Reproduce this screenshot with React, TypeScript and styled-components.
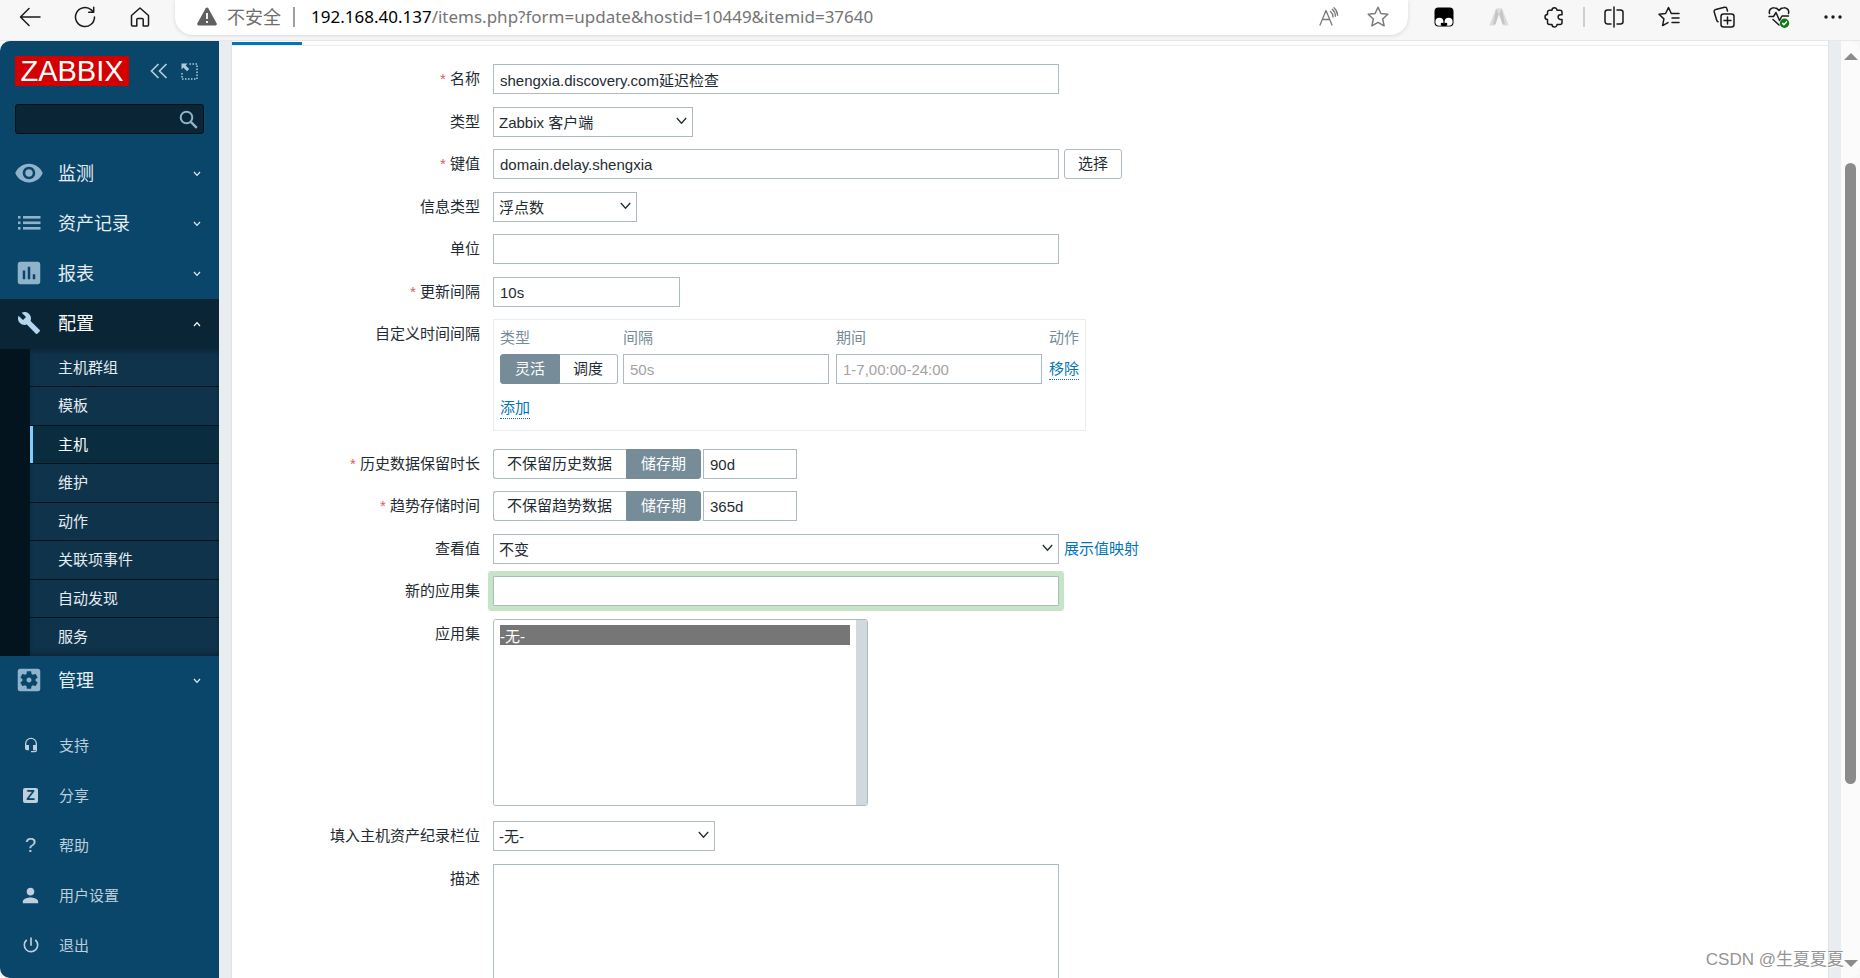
import React from "react";
import styled, { createGlobalStyle, css } from "styled-components";
import {
  MdVisibility,
  MdAssessment,
  MdBuild,
  MdSettingsApplications,
  MdHeadsetMic,
  MdPerson,
  MdPowerSettingsNew,
} from "react-icons/md";

const sans = `"Liberation Sans", "Noto Sans CJK SC", sans-serif`;
const ui = `"Noto Sans", "Noto Sans CJK SC", sans-serif`;

const GlobalStyle = createGlobalStyle`
  *, *::before, *::after { box-sizing: border-box; }
  body { margin: 0; background: #f7f7f7; font: 15px/20px ${sans}; color: #1f2c33; }
  button, input, select, textarea { font: inherit; color: inherit; margin: 0; }
  ul { list-style: none; margin: 0; padding: 0; }
`;

const Window = styled.div`
  display: flex;
  flex-direction: column;
  height: 100vh;
  overflow: hidden;
`;

/* ---------- browser toolbar ---------- */

const Toolbar = styled.header`
  display: flex;
  flex: none;
  height: 41px;
  padding-left: 2px;
  background: #f7f7f7;
  border-bottom: 1px solid #e8e8e8;
  font-family: ${ui};
`;

const ToolButton = styled.button`
  display: flex;
  align-items: center;
  justify-content: center;
  flex: none;
  width: 55px;
  height: 33px;
  padding: 0;
  border: 0;
  background: none;
  color: #1a1a1a;
  svg { display: block; fill: none; stroke: currentColor; stroke-width: 1.5; stroke-linejoin: round; stroke-linecap: round; }
`;

const AddressBar = styled.div`
  display: flex;
  align-items: center;
  flex: 1;
  min-width: 0;
  height: 35px;
  margin-left: 8px;
  padding: 0 6px 2px 22px;
  border-radius: 0 0 18px 18px;
  background: #fff;
  box-shadow: 0 1px 4px rgba(0, 0, 0, 0.12);
  color: #757575;
  font-size: 17px;
  line-height: 24px;
  white-space: nowrap;
`;

const Security = styled.span`
  display: flex;
  align-items: center;
  gap: 10px;
  padding-right: 12px;
  font-size: 18px;
  color: #6e6e6e;
`;

const Divider = styled.span`
  flex: none;
  width: 2px;
  height: 20px;
  background: #a0a0a0;
`;

const Address = styled.span`
  flex: 1;
  padding-left: 16px;
  b { font-weight: 400; color: #000; }
`;

const AddressButton = styled(ToolButton)`
  width: 49px;
  color: #7a7a7a;
`;

const Extensions = styled.div`
  display: flex;
  padding-left: 8px;
  ${ToolButton}:last-child { width: 54px; }
`;

const ToolDivider = styled.span`
  width: 2px;
  height: 20px;
  margin: 7px 1px 0 2px;
  background: #cfcfcf;
`;

/* ---------- page frame ---------- */

const Page = styled.div`
  display: flex;
  flex: 1;
  min-height: 0;
  border-radius: 10px;
  overflow: hidden;
  background: #e9edf0;
`;

const Sidebar = styled.aside`
  display: flex;
  flex-direction: column;
  flex: none;
  width: 219px;
  background: #0a466a;
  color: #e4edf2;
`;

const Brand = styled.div`
  display: flex;
  align-items: center;
  padding: 15px 15px 0;
`;

const Logo = styled.a`
  flex: none;
  width: 114px;
  height: 30px;
  margin-right: 18px;
  background: #d40000;
  color: #fff;
  font-size: 29px;
  line-height: 30px;
  text-align: center;
  text-decoration: none;
`;

const BrandButton = styled.button`
  display: flex;
  flex: none;
  width: 24px;
  padding: 0;
  margin-right: 6px;
  border: 0;
  background: none;
  justify-content: center;
  color: #b3cbd9;
`;

const Search = styled.form`
  display: flex;
  align-items: center;
  height: 30px;
  margin: 18px 15px 15px;
  padding-right: 5px;
  border: 1px solid #030f17;
  border-radius: 3px;
  background: #0a2636;
  input { flex: 1; min-width: 0; border: 0; padding: 0 7px; background: none; outline: 0; color: #fff; }
  button { display: flex; padding: 0; border: 0; background: none; color: #8fb3cb; }
`;

const MenuLink = styled.a<{ $open?: boolean }>`
  display: flex;
  align-items: center;
  height: 50px;
  padding: 0 18px 0 14px;
  color: ${(p) => (p.$open ? "#fff" : "#e4edf2")};
  background: ${(p) => (p.$open ? "#0a2636" : "none")};
  font-size: 18px;
  text-decoration: none;
`;

const MenuIcon = styled.span<{ $open?: boolean }>`
  display: flex;
  align-items: center;
  justify-content: center;
  width: 30px;
  height: 30px;
  margin: 0 14px 3px 0;
  color: ${(p) => (p.$open ? "#b3d6ee" : "#8fb3cb")};
`;

const MenuText = styled.span`
  flex: 1;
`;

const SubMenu = styled.ul`
  border-left: 30px solid #04141e;
  background: #10334c;
  box-shadow: inset 0 6px 6px -4px rgba(0, 0, 0, 0.3), inset 0 -6px 6px -4px rgba(0, 0, 0, 0.3);
`;

const SubItem = styled.li<{ $current?: boolean }>`
  height: 38px;
  border-bottom: 1px solid #04141e;
  &:nth-child(even):not(:last-child) { height: 39px; }
  &:last-child { border-bottom: 0; }
  a {
    display: block;
    height: 100%;
    padding-left: 28px;
    color: #e4edf2;
    line-height: 37px;
    text-decoration: none;
    ${(p) =>
      p.$current &&
      css`
        padding-left: 25px;
        border-left: 3px solid #80ccff;
        background: #0a2c3f;
        color: #fff;
      `}
  }
`;

const UserMenu = styled.ul`
  margin-top: 15px;
`;

const UserLink = styled.a`
  display: flex;
  align-items: center;
  height: 50px;
  padding-left: 18px;
  color: #bccfdb;
  text-decoration: none;
`;

const UserIcon = styled.span`
  display: flex;
  align-items: center;
  justify-content: center;
  width: 25px;
  margin: 0 16px 2px 0;
  color: #bfd0dc;
`;

const ZBadge = styled.span`
  width: 15px;
  height: 15px;
  border-radius: 2px;
  background: #bfd0dc;
  color: #0a466a;
  font-size: 14px;
  font-weight: 700;
  line-height: 15px;
  text-align: center;
`;

const Question = styled.span`
  font-size: 20px;
`;

const Content = styled.main`
  flex: 1;
  min-width: 0;
  margin: 0 12px;
  border: solid #dfe4e7;
  border-width: 0 1px;
  background: #fff;
`;

const Tabs = styled.div`
  display: flex;
  height: 5px;
  border-bottom: 1px solid #ebeef0;
`;

const ActiveTab = styled.span`
  width: 70px;
  height: 3px;
  margin-top: 1px;
  background: #0275b8;
`;

const ScrollBar = styled.div`
  display: flex;
  flex-direction: column;
  align-items: center;
  flex: none;
  width: 19px;
  padding: 12px 0 11px;
  background: #fbfbfb;
`;

const ScrollSpace = styled.span<{ $grow: number }>`
  flex: ${(p) => p.$grow} 0 0;
`;

const ScrollThumb = styled.span`
  flex: 621 0 0;
  width: 11px;
  border-radius: 6px;
  background: #8b8b8b;
`;

/* ---------- form ---------- */

const Form = styled.form`
  padding-top: 18px;
`;

const Row = styled.div`
  display: flex;
  align-items: flex-start;
  margin-top: 12px;
  &:nth-child(even) { margin-top: 13px; }
  &:first-child { margin-top: 0; }
`;

const Label = styled.label<{ $required?: boolean }>`
  flex: none;
  width: 248px;
  margin-right: 13px;
  line-height: 30px;
  text-align: right;
  ${(p) =>
    p.$required &&
    css`
      &::before { content: "* "; color: #e45959; }
    `}
`;

const Field = styled.div<{ $gap?: number }>`
  display: flex;
  align-items: center;
  gap: ${(p) => p.$gap ?? 5}px;
`;

const box = css`
  border: 1px solid #acbbc2;
  background: #fff;
  outline: 0;
`;

const Input = styled.input<{ $width: number; $focus?: boolean }>`
  ${box}
  width: ${(p) => p.$width}px;
  height: 30px;
  padding: 0 6px;
  border-radius: 0;
  ${(p) => p.$focus && "box-shadow: 0 0 0 5px #c5e4c8; border-radius: 1px;"}
  &::placeholder { color: #a3a3a3; opacity: 1; }
`;

const SelectWrap = styled.span`
  position: relative;
  display: flex;
  svg { position: absolute; right: 6px; top: 10px; pointer-events: none; }
`;

const SelectBox = styled.select<{ $width: number }>`
  ${box}
  width: ${(p) => p.$width}px;
  height: 30px;
  padding: 2px 20px 0 5px;
  border-radius: 0;
  appearance: none;
`;

const Button = styled.button`
  ${box}
  height: 30px;
  padding: 0 13px;
  border-radius: 3px;
`;

const Link = styled.a`
  color: #0275b8;
  text-decoration: none;
`;

const LinkButton = styled.button`
  padding: 0;
  border: 0;
  border-bottom: 1px dotted #0275b8;
  background: none;
  color: #0275b8;
  line-height: 20px;
`;

const Segments = styled.span`
  display: inline-flex;
  vertical-align: middle;
  input { position: absolute; opacity: 0; }
  label {
    height: 30px;
    padding: 0 14px 0 13px;
    border: 1px solid #acbbc2;
    line-height: 28px;
    white-space: nowrap;
  }
  label:first-of-type { border-radius: 3px 0 0 3px; border-right-width: 0; }
  label:last-of-type { border-radius: 0 3px 3px 0; border-left-width: 0; }
  input:checked + label { padding: 0 14px; border: 1px solid #768d99; background: #768d99; color: #fff; }
`;

const IntervalBox = styled.div`
  width: 593px;
  height: 112px;
  margin-bottom: 5px;
  padding: 5px 6px 0;
  border: 1px solid #ebeef0;
`;

const IntervalTable = styled.table`
  border-collapse: collapse;
  th { height: 25px; padding: 0; color: #768d99; font-weight: 400; text-align: left; }
  td { height: 40px; padding: 0 7px 0 0; vertical-align: middle; }
  tr:first-child td { height: 38px; }
  td:first-child { width: 123px; padding-right: 0; }
  td:last-child { padding-right: 0; }
`;

const ListWrap = styled.div`
  display: flex;
  width: 375px;
  height: 187px;
  margin-bottom: 3px;
  border: 1px solid #acbbc2;
  border-radius: 3px;
  overflow: hidden;
`;

const ListBox = styled.select`
  flex: 1;
  min-width: 0;
  padding: 5px 6px;
  border: 0;
  background: #fff;
  outline: 0;
  overflow: hidden;
  option { height: 20px; padding: 0; line-height: 20px; min-height: 20px; }
  option:checked { background: linear-gradient(#767676, #767676); color: #fff; -webkit-text-fill-color: #fff; }
`;

const ListTrack = styled.span`
  width: 11px;
  background: #d1d9de;
`;

const TextArea = styled.textarea`
  ${box}
  width: 566px;
  height: 160px;
  padding: 6px;
  resize: none;
`;

const Watermark = styled.div`
  position: absolute;
  right: 16px;
  bottom: 6px;
  color: #949494;
  font: 17px/24px ${sans};
  text-shadow: 1px 1px 0 #fff;
`;

/* ---------- drawings ---------- */

const Chevron = ({ up }: { up?: boolean }) => (
  <svg width="8" height="6" viewBox="0 0 8 6" fill="none" stroke="currentColor" strokeWidth="1.2">
    <path d={up ? "M1 5l3-3.4L7 5" : "M1 1l3 3.4L7 1"} />
  </svg>
);

const ListIcon = () => (
  <svg width="24" height="16" viewBox="0 0 24 16" fill="currentColor">
    {[1, 6.5, 12].map((y) => (
      <g key={y}>
        <rect x="1" y={y} width="2.5" height="2.6" />
        <rect x="6" y={y} width="17.5" height="2.6" />
      </g>
    ))}
  </svg>
);

const Select = ({ id, width, value }: { id: string; width: number; value: string }) => (
  <SelectWrap>
    <SelectBox id={id} $width={width} defaultValue={value}>
      <option>{value}</option>
    </SelectBox>
    <svg width="11" height="8" viewBox="0 0 11 8" fill="none" stroke="#1f2c33" strokeWidth="1.3">
      <path d="M0.8 1l4.7 5.2L10.2 1" />
    </svg>
  </SelectWrap>
);

const Segmented = ({ name, options, checked }: { name: string; options: string[]; checked: number }) => (
  <Segments role="radiogroup">
    {options.map((text, i) => (
      <React.Fragment key={text}>
        <input type="radio" id={`${name}-${i}`} name={name} defaultChecked={i === checked} />
        <label htmlFor={`${name}-${i}`}>{text}</label>
      </React.Fragment>
    ))}
  </Segments>
);

const MenuItem = ({ icon, text, open }: { icon: React.ReactNode; text: string; open?: boolean }) => (
  <MenuLink href="#" $open={open}>
    <MenuIcon $open={open}>{icon}</MenuIcon>
    <MenuText>{text}</MenuText>
    <Chevron up={open} />
  </MenuLink>
);

const subItems = ["主机群组", "模板", "主机", "维护", "动作", "关联项事件", "自动发现", "服务"];

const userItems: [React.ReactNode, string][] = [
  [<MdHeadsetMic size={16} />, "支持"],
  [<ZBadge>Z</ZBadge>, "分享"],
  [<Question>?</Question>, "帮助"],
  [<MdPerson size={23} />, "用户设置"],
  [<MdPowerSettingsNew size={20} />, "退出"],
];

const BrowserToolbar = () => (
  <Toolbar>
    <ToolButton aria-label="Back">
      <svg width="22" height="20" viewBox="0 0 22 20"><path d="M21 10H1.5M10 1.5L1.5 10l8.500 8.500" /></svg>
    </ToolButton>
    <ToolButton aria-label="Reload">
      <svg width="22" height="22" viewBox="0 0 22 22"><path d="M20.500 11a9.500 9.500 0 1 1-3.200-7.100L19.500 6M19.700 1.200V6.200H14.700" /></svg>
    </ToolButton>
    <ToolButton aria-label="Home">
      <svg width="20" height="20" viewBox="0 0 20 20"><path d="M1.500 8.500L10 1l8.500 7.500V18a1 1 0 0 1-1 1h-4.300v-6.500a1 1 0 0 0-1-1H7.800a1 1 0 0 0-1 1V19H2.500a1 1 0 0 1-1-1z" /></svg>
    </ToolButton>
    <AddressBar>
      <Security>
        <svg width="20" height="19" viewBox="0 0 20 19">
          <path d="M8.700 1.200a1.500 1.500 0 0 1 2.600 0l8.300 15.100a1.500 1.500 0 0 1-1.300 2.200H1.700a1.500 1.500 0 0 1-1.300-2.200z" fill="#606060" />
          <path d="M10 6v6M10 14v2" stroke="#fff" strokeWidth="1.800" />
        </svg>
        不安全
      </Security>
      <Divider />
      <Address><b>192.168.40.137</b>/items.php?form=update&amp;hostid=10449&amp;itemid=37640</Address>
      <AddressButton aria-label="Read aloud">
        <svg width="20" height="20" viewBox="0 0 20 20"><path d="M1 18L7 3.500 13 18M3.200 12.500h7.600M11.500 4.500a7 7 0 0 1 2.500 5.500M13.200 2.300a9 9 0 0 1 3.200 7M15 0.800a11 11 0 0 1 3.600 7.500" strokeWidth="1.300" /></svg>
      </AddressButton>
      <AddressButton aria-label="Add to favorites">
        <svg width="22" height="22" viewBox="0 0 22 22"><path d="M11 1.200l2.900 6.300 6.900.8-5.100 4.700 1.400 6.800-6.100-3.400-6.100 3.400 1.400-6.800L1.200 8.300l6.900-.8z" /></svg>
      </AddressButton>
    </AddressBar>
    <Extensions>
      <ToolButton aria-label="Extension">
        <svg width="20" height="20" viewBox="0 0 20 20">
          <rect x="0.500" y="0.500" width="19" height="19" rx="4" fill="#000" stroke="none" />
          <circle cx="5.400" cy="14.800" r="4" fill="#fff" stroke="none" />
          <circle cx="14.600" cy="14.800" r="4" fill="#fff" stroke="none" />
          <circle cx="8" cy="17" r="1.300" fill="#000" stroke="none" />
          <circle cx="12" cy="17" r="1.300" fill="#000" stroke="none" />
        </svg>
      </ToolButton>
      <ToolButton aria-label="Extension">
        <svg width="20" height="18" viewBox="0 0 20 18">
          <path d="M7 0.500h4L5.500 17.500H0.300z" fill="#dcdcdc" stroke="none" />
          <path d="M9 0.500h4l6.700 17h-5.200z" fill="#dcdcdc" stroke="none" />
          <path d="M7 1l3 5 3-5 3 15.500h-2.500L10 6 6.500 16.500H4z" fill="#c6c6c6" stroke="none" />
        </svg>
      </ToolButton>
      <ToolButton aria-label="Extensions">
        <svg width="20" height="22" viewBox="0 0 20 22">
          <path d="M5.500 4.200H8a2.500 2.500 0 0 1 5 0h3A2 2 0 0 1 18 6.200V8.700H16.500a2.400 2.400 0 0 0 0 4.800H18V16.500A2 2 0 0 1 16 18.500H13a2.500 2.500 0 0 1-5 0H5.500a2 2 0 0 1-2-2V13.600a2.500 2.500 0 0 1 0-5V6.200a2 2 0 0 1 2-2z" />
        </svg>
      </ToolButton>
      <ToolDivider />
      <ToolButton aria-label="Split screen">
        <svg width="20" height="22" viewBox="0 0 20 22"><path d="M7 4H3.500A2.500 2.500 0 0 0 1 6.500v9A2.500 2.500 0 0 0 3.500 18H7M13 4h3.500A2.500 2.500 0 0 1 19 6.500v9a2.500 2.500 0 0 1-2.500 2.500H13M10 1v20" /></svg>
      </ToolButton>
      <ToolButton aria-label="Favorites">
        <svg width="22" height="22" viewBox="0 0 22 22"><path d="M13.300 7.500L10.500 1.500 7.600 7.500 1 8.300l4.900 4.600-1.300 6.700 5.400-3M14 7.500h7M14 12h7M14 16.500h7" /></svg>
      </ToolButton>
      <ToolButton aria-label="Collections">
        <svg width="22" height="22" viewBox="0 0 22 22"><rect x="8" y="8" width="13" height="13" rx="2.500" /><path d="M14.500 11v7M11 14.500h7M14.500 5l-.6-2.300A2 2 0 0 0 11.500 1.200L2.700 3.500A2 2 0 0 0 1.200 6l2.500 8.300A2 2 0 0 0 5 15.700" /></svg>
      </ToolButton>
      <ToolButton aria-label="Browser essentials">
        <svg width="22" height="22" viewBox="0 0 22 22">
          <path d="M1.500 7.500C0.500 3.800 3.500 1.500 6.300 1.700 8.500 1.800 10 3 11 4.500c1-1.500 2.500-2.700 4.700-2.800C18.500 1.500 21.500 3.800 20.500 7.500M1 10.500h4.500L8 6.500l3.500 8 2.500-4.500H20.500M5 13.500l6 5.500" />
          <circle cx="16.500" cy="17.200" r="4.700" fill="#107c10" stroke="none" />
          <path d="M14.600 17.400l1.300 1.300 2.500-2.800" stroke="#fff" />
        </svg>
      </ToolButton>
      <ToolButton aria-label="Settings">
        <svg width="18" height="4" viewBox="0 0 18 4"><g fill="#1a1a1a" stroke="none"><circle cx="2" cy="2" r="1.700" /><circle cx="9" cy="2" r="1.700" /><circle cx="16" cy="2" r="1.700" /></g></svg>
      </ToolButton>
    </Extensions>
  </Toolbar>
);

export default function App() {
  return (
    <Window>
      <GlobalStyle />
      <BrowserToolbar />
      <Page>
        <Sidebar>
          <Brand>
            <Logo href="#">ZABBIX</Logo>
            <BrandButton aria-label="Collapse sidebar">
              <svg width="18" height="16" viewBox="0 0 18 16" fill="none" stroke="currentColor" strokeWidth="1.700"><path d="M8.500 1l-7 7 7 7M16.500 1l-7 7 7 7" /></svg>
            </BrandButton>
            <BrandButton aria-label="Hide sidebar">
              <svg width="17" height="17" viewBox="0 0 17 17" fill="none" stroke="currentColor" strokeWidth="1.500">
                <path d="M8.500 1H16v15H1V8.500" strokeDasharray="1.500 1.500" />
                <path d="M0.500 0.500h6L4.600 2.400l3.600 3.600-2.200 2.200-3.600-3.600L0.500 6.500z" fill="currentColor" stroke="none" />
              </svg>
            </BrandButton>
          </Brand>
          <Search role="search">
            <input aria-label="Search" />
            <button type="button" aria-label="Search">
              <svg width="19" height="19" viewBox="0 0 19 19" fill="none" stroke="currentColor"><circle cx="7.500" cy="7.500" r="5.800" strokeWidth="2" /><path d="M11.800 11.800l6 6" strokeWidth="2.400" /></svg>
            </button>
          </Search>
          <nav>
            <MenuItem icon={<MdVisibility size={30} />} text="监测" />
            <MenuItem icon={<ListIcon />} text="资产记录" />
            <MenuItem icon={<MdAssessment size={30} />} text="报表" />
            <MenuItem icon={<MdBuild size={24} />} text="配置" open />
            <SubMenu>
              {subItems.map((text) => (
                <SubItem key={text} $current={text === "主机"}>
                  <a href="#">{text}</a>
                </SubItem>
              ))}
            </SubMenu>
            <MenuItem icon={<MdSettingsApplications size={30} />} text="管理" />
          </nav>
          <UserMenu>
            {userItems.map(([icon, text]) => (
              <li key={text}>
                <UserLink href="#">
                  <UserIcon>{icon}</UserIcon>
                  {text}
                </UserLink>
              </li>
            ))}
          </UserMenu>
        </Sidebar>

        <Content>
          <Tabs>
            <ActiveTab />
          </Tabs>
          <Form>
            <Row>
              <Label htmlFor="name" $required>名称</Label>
              <Input id="name" $width={566} defaultValue="shengxia.discovery.com延迟检查" />
            </Row>
            <Row>
              <Label htmlFor="type">类型</Label>
              <Select id="type" width={200} value="Zabbix 客户端" />
            </Row>
            <Row>
              <Label htmlFor="key" $required>键值</Label>
              <Field>
                <Input id="key" $width={566} defaultValue="domain.delay.shengxia" />
                <Button type="button">选择</Button>
              </Field>
            </Row>
            <Row>
              <Label htmlFor="value-type">信息类型</Label>
              <Select id="value-type" width={144} value="浮点数" />
            </Row>
            <Row>
              <Label htmlFor="units">单位</Label>
              <Input id="units" $width={566} />
            </Row>
            <Row>
              <Label htmlFor="delay" $required>更新间隔</Label>
              <Input id="delay" $width={187} defaultValue="10s" />
            </Row>
            <Row>
              <Label as="span">自定义时间间隔</Label>
              <IntervalBox>
                <IntervalTable>
                  <thead>
                    <tr><th>类型</th><th>间隔</th><th>期间</th><th>动作</th></tr>
                  </thead>
                  <tbody>
                    <tr>
                      <td><Segmented name="interval-type" options={["灵活", "调度"]} checked={0} /></td>
                      <td><Input aria-label="间隔" $width={206} placeholder="50s" /></td>
                      <td><Input aria-label="期间" $width={206} placeholder="1-7,00:00-24:00" /></td>
                      <td><LinkButton type="button">移除</LinkButton></td>
                    </tr>
                    <tr>
                      <td colSpan={4}><LinkButton type="button">添加</LinkButton></td>
                    </tr>
                  </tbody>
                </IntervalTable>
              </IntervalBox>
            </Row>
            <Row>
              <Label as="span" $required>历史数据保留时长</Label>
              <Field $gap={2}>
                <Segmented name="history" options={["不保留历史数据", "储存期"]} checked={1} />
                <Input aria-label="历史数据保留时长" $width={94} defaultValue="90d" />
              </Field>
            </Row>
            <Row>
              <Label as="span" $required>趋势存储时间</Label>
              <Field $gap={2}>
                <Segmented name="trends" options={["不保留趋势数据", "储存期"]} checked={1} />
                <Input aria-label="趋势存储时间" $width={94} defaultValue="365d" />
              </Field>
            </Row>
            <Row>
              <Label htmlFor="valuemap">查看值</Label>
              <Field>
                <Select id="valuemap" width={566} value="不变" />
                <Link href="#">展示值映射</Link>
              </Field>
            </Row>
            <Row>
              <Label htmlFor="new-application">新的应用集</Label>
              <Input id="new-application" $width={566} $focus />
            </Row>
            <Row>
              <Label htmlFor="applications">应用集</Label>
              <ListWrap>
                <ListBox id="applications" multiple defaultValue={["0"]}>
                  <option value="0">-无-</option>
                </ListBox>
                <ListTrack />
              </ListWrap>
            </Row>
            <Row>
              <Label htmlFor="inventory">填入主机资产纪录栏位</Label>
              <Select id="inventory" width={222} value="-无-" />
            </Row>
            <Row>
              <Label htmlFor="description">描述</Label>
              <TextArea id="description" />
            </Row>
          </Form>
        </Content>

        <ScrollBar aria-hidden="true">
          <svg width="14" height="7" viewBox="0 0 14 7"><path d="M7 0l7 7H0z" fill="#8b8b8b" /></svg>
          <ScrollSpace $grow={103} />
          <ScrollThumb />
          <ScrollSpace $grow={176} />
          <svg width="14" height="7" viewBox="0 0 14 7"><path d="M0 0h14L7 7z" fill="#8b8b8b" /></svg>
        </ScrollBar>
      </Page>
      <Watermark>CSDN @生夏夏夏</Watermark>
    </Window>
  );
}
